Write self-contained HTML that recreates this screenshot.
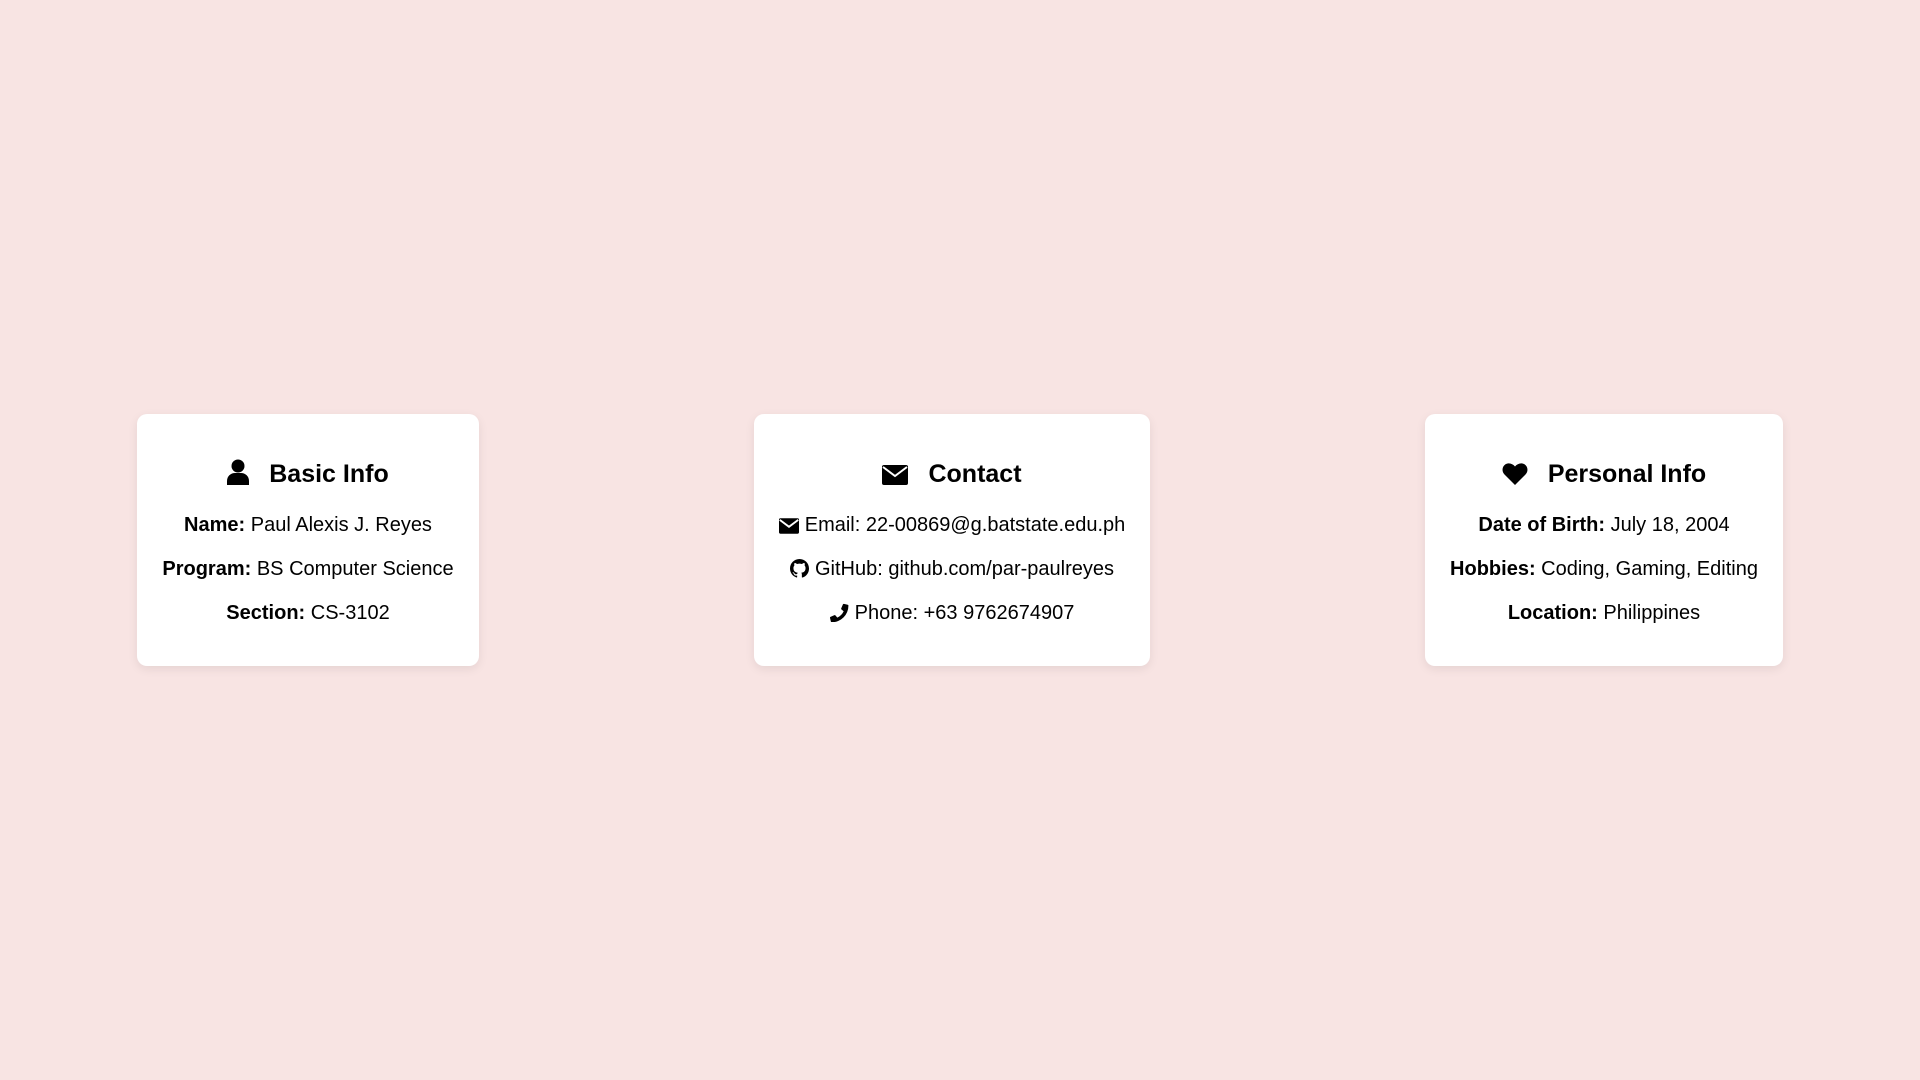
<!DOCTYPE html>
<html><head><meta charset="utf-8"><style>
html,body{margin:0;padding:0}
body{width:1920px;height:1080px;background:#f8e4e3;font-family:"Liberation Sans",Arial,sans-serif;color:#000;position:relative;overflow:hidden;text-align:center}
.card{position:absolute;top:414px;height:252px;background:#fff;border-radius:10px;box-shadow:0 3px 10px rgba(0,0,0,0.08);box-sizing:border-box}
.w{position:absolute;top:0;text-align:center}
h2{margin:0;position:absolute;left:0;right:0;top:459px;font-size:25px;font-weight:bold;line-height:30px;white-space:nowrap}
h2 svg{vertical-align:-3px;margin-right:20px}
.l{position:absolute;left:0;right:0;font-size:20px;line-height:24px;white-space:nowrap}
.l svg{vertical-align:-3px;margin-right:6px}
</style></head><body>
<div class="card" style="left:137px;width:342px"></div>
<div class="card" style="left:754px;width:396px"></div>
<div class="card" style="left:1425px;width:358px"></div>

<div class="w" style="left:137px;width:342px">
<h2><svg width="22" height="26" viewBox="0 0 22 26"><circle cx="11" cy="7" r="6.5"/><path d="M0 26v-4c0-5 4-8 8-8h6c4 0 8 3 8 8v4z"/></svg>Basic Info</h2>
<div class="l" style="top:513px"><b>Name:</b> Paul Alexis J. Reyes</div>
<div class="l" style="top:557px"><b>Program:</b> BS Computer Science</div>
<div class="l" style="top:601px"><b>Section:</b> CS-3102</div>
</div>

<div class="w" style="left:754px;width:396px">
<h2><svg width="26" height="20" viewBox="0 0 26 20"><rect x="0" y="0" width="26" height="20" rx="2"/><path d="M1 2l12 9 12-9" fill="none" stroke="#fff" stroke-width="2"/></svg>Contact</h2>
<div class="l" style="top:513px"><svg width="20" height="16" viewBox="0 0 26 20"><rect x="0" y="0" width="26" height="20" rx="2"/><path d="M1 2l12 9 12-9" fill="none" stroke="#fff" stroke-width="2.5"/></svg>Email: 22-00869@g.batstate.edu.ph</div>
<div class="l" style="top:557px"><svg width="19" height="19" viewBox="0 0 16 16"><path d="M8 0C3.58 0 0 3.58 0 8c0 3.54 2.29 6.53 5.47 7.59.4.07.55-.17.55-.38v-1.33c-2.23.48-2.7-1.07-2.7-1.07-.36-.92-.89-1.17-.89-1.17-.73-.5.06-.49.06-.49.8.06 1.23.83 1.23.83.71 1.23 1.87.87 2.33.66.07-.52.28-.87.5-1.07-1.78-.2-3.65-.89-3.65-3.95 0-.87.31-1.59.82-2.15-.08-.2-.36-1.02.08-2.12 0 0 .67-.21 2.2.82a7.6 7.6 0 0 1 4 0c1.53-1.04 2.2-.82 2.2-.82.44 1.1.16 1.92.08 2.12.51.56.82 1.27.82 2.15 0 3.07-1.87 3.75-3.65 3.95.29.25.54.73.54 1.48v2.2c0 .21.15.46.55.38A8.01 8.01 0 0 0 16 8c0-4.42-3.58-8-8-8z"/></svg>GitHub: github.com/par-paulreyes</div>
<div class="l" style="top:601px"><svg width="19" height="19" viewBox="0 0 20 20"><path d="M19.5 14.6l-4.2-1.8a1 1 0 0 0-1.1.3l-1.9 2.3A14 14 0 0 1 5.6 8.7l2.3-1.9a1 1 0 0 0 .3-1.1L6.4 1.5A1 1 0 0 0 5.3.9L1.4 1.8A1 1 0 0 0 .6 2.8 17.5 17.5 0 0 0 18.1 20.3a1 1 0 0 0 1-.8l.9-3.9a1 1 0 0 0-.5-1z" transform="translate(20,0) scale(-1,1)"/></svg>Phone: +63 9762674907</div>
</div>

<div class="w" style="left:1425px;width:358px">
<h2><svg width="26" height="22" viewBox="0 0 26 22"><path d="M13 22L2.5 11.5C-0.5 8.5 0 3.5 3.5 1.3 6.5-.6 10.5.3 13 3.5 15.5.3 19.5-.6 22.5 1.3 26 3.5 26.5 8.5 23.5 11.5z"/></svg>Personal Info</h2>
<div class="l" style="top:513px"><b>Date of Birth:</b> July 18, 2004</div>
<div class="l" style="top:557px"><b>Hobbies:</b> Coding, Gaming, Editing</div>
<div class="l" style="top:601px"><b>Location:</b> Philippines</div>
</div>
</body></html>
